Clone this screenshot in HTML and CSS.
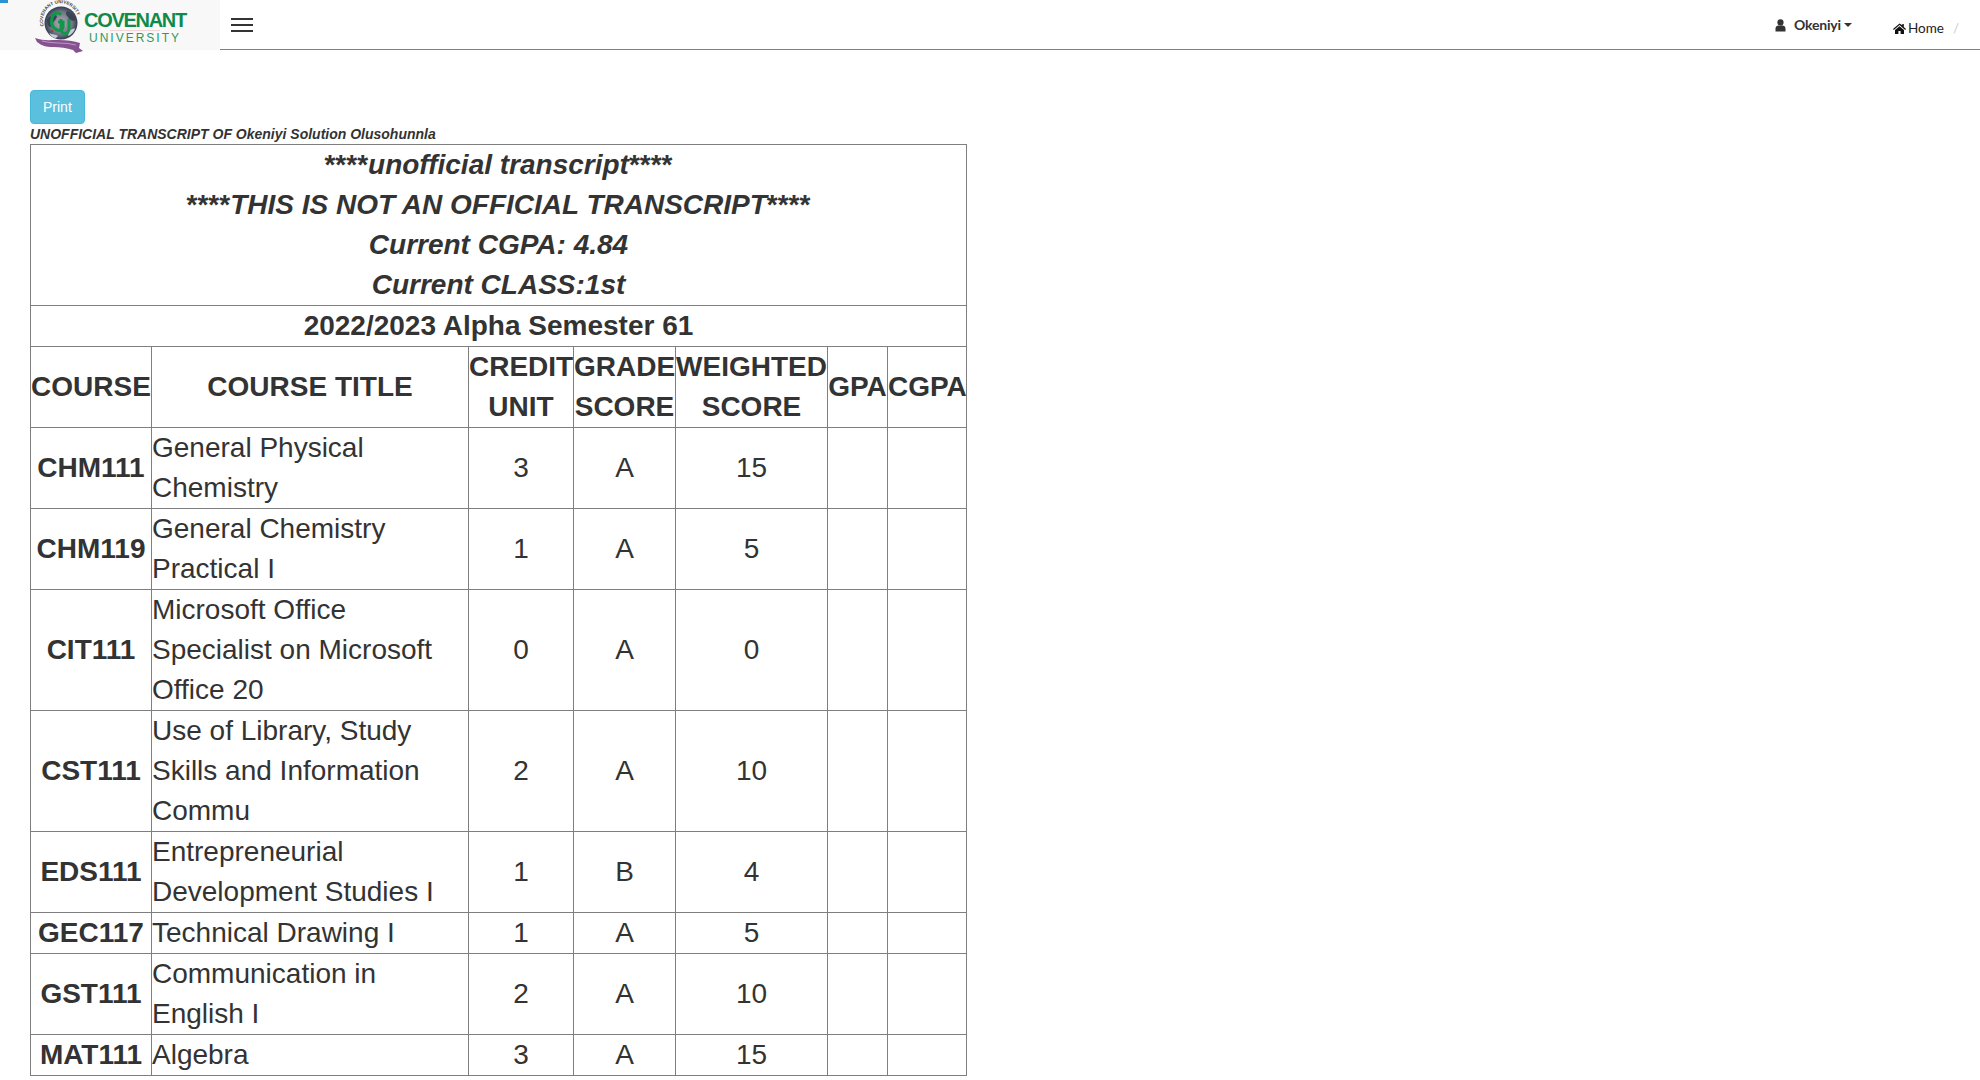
FILE: index.html
```html
<!DOCTYPE html>
<html lang="en">
<head>
    <meta charset="UTF-8">
    <meta name="viewport" content="width=device-width, initial-scale=1.0">
    <title>Transcript</title>
    <link rel="stylesheet" href="styles.css">
</head>
<body>
    <div class="corner-mark"></div>
    <nav class="topbar">
        <div class="logo-box">
            <svg class="logo-crest" width="56" height="54" viewBox="0 0 56 54">
                <defs>
                    <radialGradient id="globe" cx="0.5" cy="0.5" r="0.55">
                        <stop offset="0" stop-color="#aeb0bb"/>
                        <stop offset="0.65" stop-color="#6d7280"/>
                        <stop offset="1" stop-color="#1d2740"/>
                    </radialGradient>
                    <path id="ring" d="M9.800 26A17.500 17.500 0 1 1 43.800 18.200"/>
                </defs>
                <circle cx="27" cy="23" r="16.500" fill="url(#globe)"/>
                <text class="crest-ring"><textPath href="#ring">COVENANT UNIVERSITY</textPath></text>
                <path d="M13 19c4-4 8-5 10-3-1 5-5 6-6 11-3 0-4-3-4-8zM33 11c4 1 8 5 9 9-3 2-7 0-8-3-2-2-3-4-1-6z" fill="#3b4254"/>
                <path d="M15 33c4 2 7 1 9 3l-2 2c-3 0-5-2-7-5zM35 31c3-2 5-3 6-2-1 3-4 6-7 7z" fill="#c8cad2"/>
                <path d="M27 15c-2-3-8-3-9 3-1 5 0 10 5 12 3 1 6 0 6-4v-4h-5" fill="none" stroke="#14964a" stroke-width="3.200"/>
                <path d="M27 19v10c0 6 8 6 8 0V19" fill="none" stroke="#14964a" stroke-width="3"/>
                <circle cx="18" cy="31" r="1" fill="#c2262e"/>
                <path d="M1 38c8 3 15 2 23 2 9 0 16 1 22 3l-1 5 4 3-7 2-3-3c-6-2-13-3-20-3-7 0-11-1-16-5z" fill="#85518f"/>
                <path d="M8 41c10 3 24 1 34 4" fill="none" stroke="#c9a9d0" stroke-width="0.800"/>
            </svg>
            <div class="logo-words">
                <span class="logo-name">COVENANT</span>
                <span class="logo-rule"></span>
                <span class="logo-sub">UNIVERSITY</span>
            </div>
        </div>
        <button class="menu-btn">
            <span></span><span></span><span></span>
        </button>
        <div class="topbar-right">
            <a class="user-link">
                <svg width="11" height="13" viewBox="0 0 11 13"><circle cx="5.500" cy="3.400" r="3.100" fill="#333"/><path d="M0.500 12.500V9.500c0-2 1.500-3 3-3h4c1.500 0 3 1 3 3v3z" fill="#333"/></svg>
                Okeniyi<i class="caret"></i>
            </a>
            <a class="home-link">
                <svg width="13" height="11" viewBox="0 0 13 11"><path d="M6.500 0.500L0 6l.8.900 5.700-4.800 5.700 4.800.8-.9-2.200-1.900V1H9.300v1.200z" fill="#111"/><path d="M2 7l4.500-3.800L11 7v4H7.600V8H5.400v3H2z" fill="#111"/></svg>
                Home
            </a>
            <span class="crumb-sep">/</span>
        </div>
    </nav>

    <div class="content">
        <button class="btn-print">Print</button>
        <div class="transcript-label">UNOFFICIAL TRANSCRIPT OF Okeniyi Solution Olusohunnla</div>
        <table class="transcript">
            <colgroup>
                <col class="c-code"><col class="c-title"><col class="c-unit"><col class="c-grade"><col class="c-weight"><col class="c-gpa"><col class="c-cgpa">
            </colgroup>
            <tr>
                <th colspan="7" class="notice">
                    ****<i>unofficial transcript</i>****<br>
                    ****<i>THIS IS NOT AN OFFICIAL TRANSCRIPT</i>****<br>
                    <i>Current CGPA: 4.84</i><br>
                    <i>Current CLASS:1st</i>
                </th>
            </tr>
            <tr><th colspan="7">2022/2023 Alpha Semester 61</th></tr>
            <tr>
                <th>COURSE</th><th>COURSE TITLE</th><th>CREDIT UNIT</th><th>GRADE SCORE</th><th>WEIGHTED SCORE</th><th>GPA</th><th>CGPA</th>
            </tr>
            <tr><th>CHM111</th><td class="title">General Physical Chemistry</td><td>3</td><td>A</td><td>15</td><td></td><td></td></tr>
            <tr><th>CHM119</th><td class="title">General Chemistry Practical I</td><td>1</td><td>A</td><td>5</td><td></td><td></td></tr>
            <tr><th>CIT111</th><td class="title">Microsoft Office Specialist on Microsoft Office 20</td><td>0</td><td>A</td><td>0</td><td></td><td></td></tr>
            <tr><th>CST111</th><td class="title">Use of Library, Study Skills and Information Commu</td><td>2</td><td>A</td><td>10</td><td></td><td></td></tr>
            <tr><th>EDS111</th><td class="title">Entrepreneurial Development Studies I</td><td>1</td><td>B</td><td>4</td><td></td><td></td></tr>
            <tr><th>GEC117</th><td class="title">Technical Drawing I</td><td>1</td><td>A</td><td>5</td><td></td><td></td></tr>
            <tr><th>GST111</th><td class="title">Communication in English I</td><td>2</td><td>A</td><td>10</td><td></td><td></td></tr>
            <tr><th>MAT111</th><td class="title">Algebra</td><td>3</td><td>A</td><td>15</td><td></td><td></td></tr>
        </table>
    </div>
</body>
</html>
```

FILE: styles.css
```css
* {
    box-sizing: border-box;
}

html, body {
    margin: 0;
    padding: 0;
}

body {
    font-family: "Liberation Sans", Arial, sans-serif;
    font-size: 14px;
    line-height: 20px;
    color: #333;
    background: #fff;
    position: relative;
}

.corner-mark {
    position: absolute;
    left: 0;
    top: 0;
    width: 8px;
    height: 3px;
    background: #2a93d8;
    z-index: 2;
}

.topbar {
    display: flex;
    align-items: flex-start;
    height: 50px;
    border-bottom: 1px solid #7f7f7f;
}

.logo-box {
    position: relative;
    display: flex;
    align-items: flex-start;
    width: 220px;
    height: 50px;
    padding-left: 34px;
    background: #f8f8f8;
}

.logo-crest {
    flex: none;
    overflow: visible;
}

.crest-ring {
    font-size: 4.600px;
    font-weight: 700;
    fill: #444;
}

.logo-words {
    display: flex;
    flex-direction: column;
    align-items: center;
    width: 100px;
    margin-left: -5px;
    padding-top: 10px;
}

.logo-name {
    font-size: 20px;
    line-height: 20px;
    font-weight: 700;
    letter-spacing: -1.300px;
    color: #0f8a4a;
}

.logo-rule {
    width: 50px;
    height: 1px;
    background: #f3d4d8;
}

.logo-sub {
    font-size: 12px;
    line-height: 14px;
    letter-spacing: 2px;
    color: #2b9a5f;
}

.menu-btn {
    display: flex;
    flex-direction: column;
    gap: 4px;
    width: 22px;
    margin: 18px 0 0 11px;
    padding: 0;
    border: 0;
    background: none;
}

.menu-btn span {
    display: block;
    width: 22px;
    height: 2px;
    background: #333;
}

.topbar-right {
    display: flex;
    align-items: flex-start;
    margin-left: auto;
    font-family: Lato, sans-serif;
    font-size: 13.500px;
    padding-right: 21px;
}

.user-link {
    display: flex;
    align-items: center;
    gap: 8px;
    margin-top: 15px;
    font-size: 14px;
    font-weight: 700;
    letter-spacing: -0.200px;
}

.caret {
    display: inline-block;
    margin-left: -5px;
    border-top: 4px solid #333;
    border-left: 4px solid transparent;
    border-right: 4px solid transparent;
}

.home-link {
    display: flex;
    align-items: center;
    gap: 2px;
    margin: 18px 0 0 41px;
    color: #222;
}

.crumb-sep {
    margin: 18px 0 0 9px;
    color: #ccc;
}

.content {
    padding: 40px 30px 0;
}

.btn-print {
    display: block;
    height: 34px;
    padding: 6px 12px;
    border: 1px solid #46b8da;
    border-radius: 4px;
    background: #5bc0de;
    color: #fff;
    font-family: inherit;
    font-size: 14px;
    line-height: 20px;
}

.transcript-label {
    font-weight: 700;
    font-style: italic;
}

.transcript {
    border-collapse: collapse;
    table-layout: fixed;
    width: 936px;
    font-size: 28px;
    line-height: 40px;
}

.c-code { width: 121px; }
.c-title { width: 317px; }
.c-unit { width: 105px; }
.c-grade { width: 102px; }
.c-weight { width: 152px; }
.c-gpa { width: 60px; }
.c-cgpa { width: 79px; }

.transcript th,
.transcript td {
    padding: 0;
    border: 1px solid #7f7f7f;
    text-align: center;
    vertical-align: middle;
}

.transcript th {
    font-weight: 700;
}

.transcript .title {
    text-align: left;
}

.notice {
    font-weight: 700;
}

.notice i {
    font-style: italic;
}
```
